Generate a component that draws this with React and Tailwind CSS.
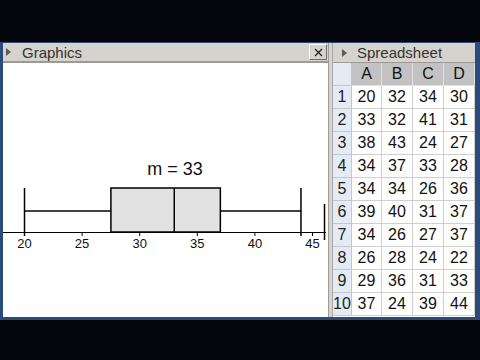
import React from "react";

const rows = [
  [20, 32, 34, 30],
  [33, 32, 41, 31],
  [38, 43, 24, 27],
  [34, 37, 33, 28],
  [34, 34, 26, 36],
  [39, 40, 31, 37],
  [34, 26, 27, 37],
  [26, 28, 24, 22],
  [29, 36, 31, 33],
  [37, 24, 39, 44],
];

// value -> x inside the graphics canvas
const sx = (v) => 21.5 + (v - 20) * 11.52;

const Arrow = () => (
  <svg width="5" height="8" viewBox="0 0 5 8" className="shrink-0">
    <polygon points="0,0 5,4 0,8" fill="#5a5a5a" />
  </svg>
);

const BoxPlot = () => (
  <svg width="323" height="253" className="block">
    <text x="172" y="112" textAnchor="middle" fontSize="18" fill="#111" fontFamily="Liberation Sans, Arial, sans-serif">
      m = 33
    </text>
    {/* axis */}
    <line x1="0" y1="169.5" x2="323" y2="169.5" stroke="#000" strokeWidth="1" />
    {[20, 25, 30, 35, 40, 45].map((v) => (
      <g key={v}>
        <line x1={sx(v)} y1="169" x2={sx(v)} y2="173" stroke="#000" strokeWidth="1" />
        <text x={sx(v)} y="185" textAnchor="middle" fontSize="13" fill="#111" fontFamily="Liberation Sans, Arial, sans-serif">
          {v}
        </text>
      </g>
    ))}
    <line x1="321.5" y1="141" x2="321.5" y2="177" stroke="#000" strokeWidth="1.5" />
    {/* whiskers */}
    <line x1={sx(20)} y1="125" x2={sx(20)} y2="173" stroke="#000" strokeWidth="1.5" />
    <line x1={sx(44)} y1="125" x2={sx(44)} y2="173" stroke="#000" strokeWidth="1.5" />
    <line x1={sx(20)} y1="148" x2={sx(27.5)} y2="148" stroke="#000" strokeWidth="1.5" />
    <line x1={sx(37)} y1="148" x2={sx(44)} y2="148" stroke="#000" strokeWidth="1.5" />
    {/* box */}
    <rect x={sx(27.5)} y="125" width={sx(37) - sx(27.5)} height="44" fill="#e2e2e2" stroke="#000" strokeWidth="1.5" />
    <line x1={sx(33)} y1="125" x2={sx(33)} y2="169" stroke="#000" strokeWidth="1.5" />
  </svg>
);

export default function App() {
  return (
    <div className="w-[480px] h-[360px] bg-[#05050c] flex flex-col font-['Liberation_Sans',Arial,sans-serif]">
      <div className="h-[42px] shrink-0" />
      <div className="h-[278px] shrink-0 flex border-t border-b-[3px] border-l-[3px] border-r-[5px] border-[#2c4b78]">
        {/* Graphics panel */}
        <div className="w-[326px] flex flex-col border-r border-[#9a9a9a]">
          <div className="h-[20px] shrink-0 bg-[#d6d3ce] border-b-2 border-[#9c9a96] flex items-center pl-[3px]">
            <Arrow />
            <span className="ml-[11px] text-[15px] text-[#333] leading-none">Graphics</span>
            <div className="ml-auto mr-[1px] w-[18px] h-[16px] bg-[#d6d3ce] border border-t-white border-l-white border-r-[#6e6e6e] border-b-[#6e6e6e] flex items-center justify-center">
              <svg width="9" height="9" viewBox="0 0 9 9">
                <path d="M1 1L8 8M8 1L1 8" stroke="#222" strokeWidth="1.3" />
              </svg>
            </div>
          </div>
          <div className="flex-1 bg-white">
            <BoxPlot />
          </div>
        </div>
        {/* divider */}
        <div className="w-[4px] bg-[#d6d3ce] border-r border-[#a8a8a8]" />
        {/* Spreadsheet panel */}
        <div className="flex-1 flex flex-col bg-white">
          <div className="h-[20px] shrink-0 bg-[#d6d3ce] border-b border-[#9c9a96] flex items-center pl-[9px]">
            <Arrow />
            <span className="ml-[10px] text-[15px] text-[#333] leading-none">Spreadsheet</span>
          </div>
          <div className="grid grid-cols-[19px_30px_31px_31px_31px] grid-rows-[23px] auto-rows-[23px] text-[16px] text-[#111]">
            <div className="bg-[#e4ebf4] border-r border-b border-[#c4c8cc]" />
            {["A", "B", "C", "D"].map((c) => (
              <div key={c} className="bg-[#c2c2c2] border-r border-b border-[#e2e2e2] flex items-center justify-center">
                {c}
              </div>
            ))}
            {rows.map((r, i) => (
              <React.Fragment key={i}>
                <div className="bg-[#e4ebf4] border-r border-b border-[#c4c8cc] flex items-center justify-center text-[#222]">
                  {i + 1}
                </div>
                {r.map((v, j) => (
                  <div key={j} className="bg-white border-r border-b border-[#cfcfcf] flex items-center justify-center">
                    {v}
                  </div>
                ))}
              </React.Fragment>
            ))}
          </div>
        </div>
      </div>
    </div>
  );
}
